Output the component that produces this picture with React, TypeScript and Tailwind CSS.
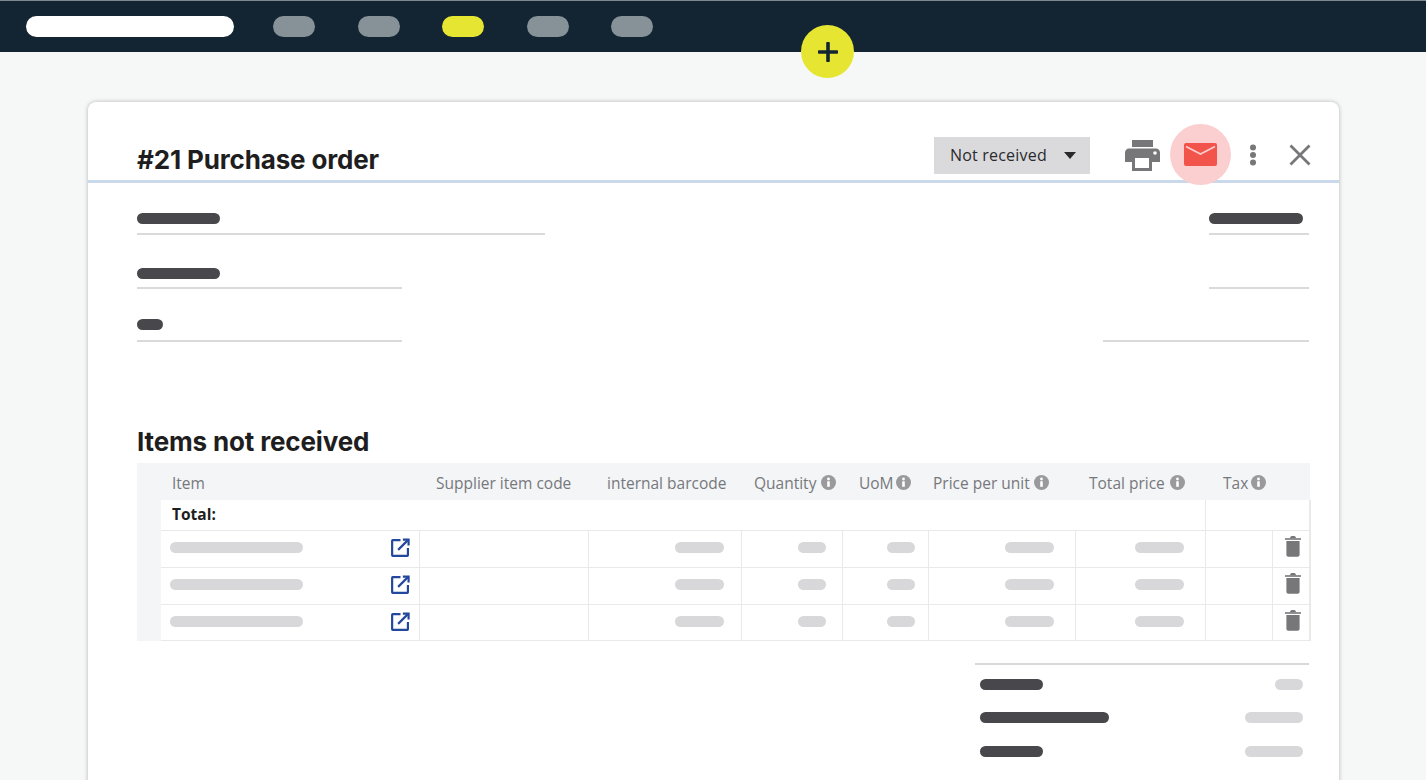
import React from "react";

const Bar = ({ className }: { className: string }) => <div className={`rounded-full ${className}`} />;

const Info = () => (
  <svg viewBox="0 0 15 15" className="inline-block w-[15px] h-[15px] shrink-0">
    <circle cx="7.5" cy="7.5" r="7.5" fill="#9a9a9d" />
    <rect x="6.2" y="6.3" width="2.6" height="5.5" fill="#fff" />
    <circle cx="7.5" cy="4" r="1.400" fill="#fff" />
  </svg>
);

const External = () => (
  <svg viewBox="0 0 20 20" className="w-[19px] h-[19px]" fill="none" stroke="#23479c" strokeWidth="2.3">
    <path d="M10 2.200H1.800a.6.6 0 0 0-.6.6v15.400a.6.6 0 0 0 .6.6h15.400a.6.6 0 0 0 .6-.6V10.500" />
    <path d="M7.500 12.500 17.500 2.500" />
    <path d="M12.500 1.800h6v6" />
  </svg>
);

const Trash = () => (
  <svg viewBox="0 0 16 22" className="w-4 h-[22px]" fill="#77777a">
    <path d="M0 3.200h16v1.600H0z" />
    <path d="M5 3.200C5 1.600 6 1 8 1s3 .6 3 2.200z" />
    <path d="M1.400 6h13.200v13.800c0 1.200-.8 2-2 2H3.400c-1.200 0-2-.8-2-2z" />
  </svg>
);

const Th = ({ label, info, pad, gap = "gap-[5px]" }: { label: string; info?: boolean; pad: string; gap?: string }) => (
  <th className={`h-[37px] pt-[4px] font-normal text-left whitespace-nowrap ${pad}`}>
    <span className={`inline-flex items-center text-[15.5px] text-[#77787c] ${gap}`}>
      <span>{label}</span>
      {info && <span className="-mt-[4px] flex"><Info /></span>}
    </span>
  </th>
);

const cell = "border-l border-b border-[#e9e9e7] pr-[17px] pb-[2px] align-middle";
const Pill = ({ w }: { w: string }) => <div className={`ml-auto h-[11px] rounded-full bg-[#d8d8da] ${w}`} />;

const Row = ({ h }: { h: string }) => (
  <tr className={h}>
    <td className="border-b border-[#e9e9e7] pl-[9px] pr-[9px] pb-[2px]">
      <div className="flex items-center justify-between">
        <div className="h-[11px] w-[133px] rounded-full bg-[#d8d8da]" />
        <External />
      </div>
    </td>
    <td className={cell} />
    <td className={cell}><Pill w="w-[49px]" /></td>
    <td className={`${cell} !pr-[16px]`}><Pill w="w-[28px]" /></td>
    <td className={`${cell} !pr-[13px]`}><Pill w="w-[28px]" /></td>
    <td className={`${cell} !pr-[21px]`}><Pill w="w-[49px]" /></td>
    <td className={`${cell} !pr-[21px]`}><Pill w="w-[49px]" /></td>
    <td className={cell} />
    <td className={`${cell} !pr-0 !pb-[5px] border-r-2 border-r-[#e9e9e7]`}>
      <div className="flex justify-center pl-[4px]"><Trash /></div>
    </td>
  </tr>
);

const Total = ({ left, right, top }: { left: string; right: string; top: string }) => (
  <div className={`flex items-center justify-between pl-[5px] pr-[6px] h-[11px] ${top}`}>
    <Bar className={`h-[11px] bg-[#47474c] ${left}`} />
    <Bar className={`h-[11px] bg-[#d8d8da] ${right}`} />
  </div>
);

export default function App() {
  return (
    <div className="relative h-[780px] overflow-hidden bg-[#f6f8f7] font-['Open_Sans',sans-serif]">
      <nav className="h-[52px] bg-[#132533] border-t border-[#7d8a93] flex items-center pl-[26px]">
        <div className="h-[21px] w-[208px] rounded-full bg-white" />
        <div className="ml-[39px] h-[21px] w-[42px] rounded-full bg-[#869198]" />
        <div className="ml-[43px] h-[21px] w-[42px] rounded-full bg-[#869198]" />
        <div className="ml-[42px] h-[21px] w-[42px] rounded-full bg-[#e6e632]" />
        <div className="ml-[43px] h-[21px] w-[42px] rounded-full bg-[#869198]" />
        <div className="ml-[42px] h-[21px] w-[42px] rounded-full bg-[#869198]" />
      </nav>

      <div className="absolute left-[801px] top-[25px] w-[53px] h-[53px] rounded-full bg-[#e6e632] flex items-center justify-center z-10">
        <svg viewBox="0 0 20 20" className="w-5 h-5" fill="#132533">
          <rect x="0" y="8.200" width="20" height="3.600" rx="0.800" />
          <rect x="8.200" y="0" width="3.600" height="20" rx="0.800" />
        </svg>
      </div>

      <main className="ml-[88px] mt-[50px] w-[1251px] h-[700px] bg-white rounded-t-[8px] shadow-[0_0_4px_rgba(0,0,0,0.28)]">
        <header className="h-[81px] border-b-[3px] border-[#c9d8ea] pl-[49px] pr-[28px] flex items-start justify-between">
          <h1 className="mt-[42px] text-[26px] leading-[32px] font-bold tracking-[-0.15px] text-[#1e1e20] font-['Inter',sans-serif]">
            #21 Purchase order
          </h1>
          <div className="flex items-center mt-[22px] h-[61px] relative z-10">
            <div className="w-[156px] h-[37px] mt-[1px] bg-[#dadadc] flex items-center pl-[16px] pr-[14px] justify-between">
              <span className="text-[16px] tracking-[0.2px] text-[#2a2a2e]">Not received</span>
              <svg viewBox="0 0 12 7" className="w-3 h-[7px]" fill="#2a2a2e"><path d="M0 0h12L6 7z" /></svg>
            </div>
            <svg viewBox="0 0 35 31" className="ml-[35px] w-[35px] h-[31px] mt-[1px]" fill="#77777a">
              <path d="M7 0h21v7H7z" />
              <path d="M4 8.500h27c2.200 0 4 1.800 4 4v9.500h-8v9H7v-9H0v-9.500c0-2.200 1.800-4 4-4Z" />
              <rect x="10" y="18" width="14" height="10" fill="#fff" />
              <circle cx="30" cy="13" r="1.800" fill="#fff" />
            </svg>
            <div className="ml-[10px] w-[61px] h-[61px] rounded-full bg-[#fbcfcf] flex items-center justify-center">
              <svg viewBox="0 0 33 23" className="w-[33px] h-[23px]">
                <rect width="33" height="23" rx="2" fill="#f2544b" />
                <path d="M2 3.500 16.500 11 31 3.500" fill="none" stroke="#fbcfcf" strokeWidth="1.600" />
              </svg>
            </div>
            <svg viewBox="0 0 8 22" className="ml-[18px] w-2 h-[22px]" fill="#77777a">
              <circle cx="4" cy="3.500" r="3" /><circle cx="4" cy="11" r="3" /><circle cx="4" cy="18.500" r="3" />
            </svg>
            <svg viewBox="0 0 22 22" className="ml-[32px] w-[22px] h-[22px]" stroke="#77777a" strokeWidth="2.800" fill="none">
              <path d="M1.500 1.500 20.500 20.500M20.500 1.500 1.500 20.500" />
            </svg>
          </div>
        </header>

        <section className="pl-[49px] pr-[30px]">
          <div className="pt-[30px] flex justify-between items-end">
            <div className="w-[408px] h-[22px] border-b-2 border-[#dadadb]"><Bar className="w-[83px] h-[11px] bg-[#47474c]" /></div>
            <div className="w-[100px] h-[22px] border-b-2 border-[#dadadb]"><Bar className="w-[94px] h-[11px] bg-[#47474c]" /></div>
          </div>
          <div className="pt-[30px] flex justify-between">
            <div className="w-[265px] h-[24px] border-b-2 border-[#dadadb] pt-[3px]"><Bar className="w-[83px] h-[11px] bg-[#47474c]" /></div>
            <div className="w-[100px] h-[24px] border-b-2 border-[#dadadb]" />
          </div>
          <div className="pt-[29px] flex justify-between">
            <div className="w-[265px] h-[24px] border-b-2 border-[#dadadb] pt-[1px]"><Bar className="w-[26px] h-[11px] bg-[#47474c]" /></div>
            <div className="w-[206px] h-[24px] border-b-2 border-[#dadadb]" />
          </div>

          <h2 className="mt-[84px] text-[26px] leading-[32px] font-bold tracking-[-0.15px] text-[#1e1e20] font-['Inter',sans-serif]">
            Items not received
          </h2>

          <div className="mt-[5px] w-[1173px] bg-[#f3f5f7] pl-[24px]">
            <table className="table-fixed w-[1149px] border-collapse bg-white">
              <colgroup>
                <col className="w-[258px]" /><col className="w-[169px]" /><col className="w-[153px]" />
                <col className="w-[101px]" /><col className="w-[86px]" /><col className="w-[147px]" />
                <col className="w-[130px]" /><col className="w-[67px]" /><col className="w-[38px]" />
              </colgroup>
              <thead className="bg-[#f3f5f7]">
                <tr>
                  <Th label="Item" pad="pl-[11px]" />
                  <Th label="Supplier item code" pad="pl-[17px]" />
                  <Th label="internal barcode" pad="pl-[19px]" />
                  <Th label="Quantity" info pad="pl-[13px]" />
                  <Th label="UoM" info pad="pl-[17px]" gap="gap-[2px]" />
                  <Th label="Price per unit" info pad="pl-[5px]" gap="gap-[4px]" />
                  <Th label="Total price" info pad="pl-[14px]" />
                  <Th label="Tax" info pad="pl-[18px]" gap="gap-[3px]" />
                  <th />
                </tr>
              </thead>
              <tbody>
                <tr className="h-[30px]">
                  <td colSpan={7} className="border-b border-[#e9e9e7] pl-[11px] text-[15.500px] font-bold text-[#1e1e20]">Total:</td>
                  <td colSpan={2} className="border-l border-b border-r-2 border-[#e9e9e7]" />
                </tr>
                <Row h="h-[37px]" />
                <Row h="h-[37px]" />
                <Row h="h-[36px]" />
              </tbody>
            </table>
          </div>

          <div className="mt-[22px] ml-[838px] w-[334px] border-t-2 border-[#d8d9da]">
            <Total top="mt-[14px]" left="w-[63px]" right="w-[28px]" />
            <Total top="mt-[22px]" left="w-[129px]" right="w-[58px]" />
            <Total top="mt-[23px]" left="w-[63px]" right="w-[58px]" />
          </div>
        </section>
      </main>
    </div>
  );
}
